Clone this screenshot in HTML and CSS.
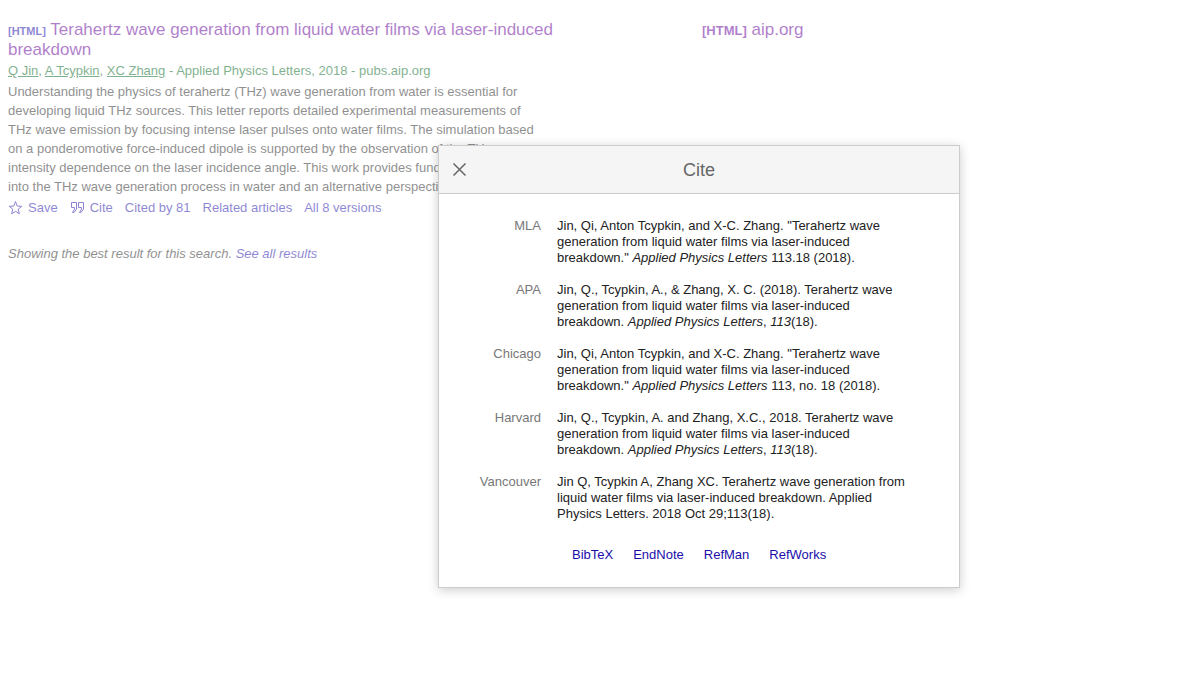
FILE: index.html
```html
<!DOCTYPE html>
<html lang="en">

<head>
    <meta charset="UTF-8">
    <meta name="viewport" content="width=device-width, initial-scale=1.0">
    <title>Search Results</title>
    <link rel="stylesheet" href="styles.css">
</head>

<body>

    <main class="page">
        <div class="result">
            <div class="result-main">
                <h3 class="title"><span class="tag">[HTML]</span> <a href="#">Terahertz wave generation from liquid water films via laser-induced breakdown</a></h3>
                <div class="authors"><a href="#">Q Jin</a>, <a href="#">A Tcypkin</a>, <a href="#">XC Zhang</a> - Applied Physics Letters, 2018 - pubs.aip.org</div>
                <p class="abstract">Understanding the physics of terahertz (THz) wave generation from water is essential for developing liquid THz sources. This letter reports detailed experimental measurements of THz wave emission by focusing intense laser pulses onto water films. The simulation based on a ponderomotive force-induced dipole is supported by the observation of the THz intensity dependence on the laser incidence angle. This work provides fundamental insights into the THz wave generation process in water and an alternative perspective</p>
                <div class="actions">
                    <a href="#" class="with-icon">
                        <svg width="15" height="16" viewBox="0 0 15 16" fill="none" stroke="currentColor"><path d="M7.5 1.5 L9.2 6 L13.8 6.3 L10.2 9.2 L11.4 13.8 L7.5 11.3 L3.6 13.8 L4.8 9.2 L1.2 6.3 L5.8 6 Z"/></svg>
                        Save</a>
                    <a href="#" class="with-icon">
                        <svg width="15" height="16" viewBox="0 0 15 16" fill="none" stroke="currentColor"><path d="M6.5 2.5 H1.5 V7.5 H4.5 V9 L2.5 12.5 H4 L6.5 9 Z M13.5 2.5 H8.5 V7.5 H11.5 V9 L9.5 12.5 H11 L13.5 9 Z"/></svg>
                        Cite</a>
                    <a href="#">Cited by 81</a>
                    <a href="#">Related articles</a>
                    <a href="#">All 8 versions</a>
                </div>
            </div>
            <div class="result-side"><a href="#"><span class="tag">[HTML]</span> aip.org</a></div>
        </div>
        <p class="best">Showing the best result for this search. <a href="#">See all results</a></p>
    </main>

    <div class="dialog" role="dialog" aria-labelledby="cite-title">
        <div class="dialog-header">
            <button class="close" type="button" aria-label="Close">
                <svg width="15" height="15" viewBox="0 0 15 15" fill="none" stroke="currentColor" stroke-width="1.5"><path d="M1.5 1.5 L13.5 13.5 M13.5 1.5 L1.5 13.5"/></svg>
            </button>
            <h2 id="cite-title">Cite</h2>
        </div>
        <div class="dialog-body">
            <table class="citations">
                <tr>
                    <th scope="row">MLA</th>
                    <td>Jin, Qi, Anton Tcypkin, and X-C. Zhang. "Terahertz wave generation from liquid water films via laser-induced breakdown." <i>Applied Physics Letters</i> 113.18 (2018).</td>
                </tr>
                <tr>
                    <th scope="row">APA</th>
                    <td>Jin, Q., Tcypkin, A., &amp; Zhang, X. C. (2018). Terahertz wave generation from liquid water films via laser-induced breakdown. <i>Applied Physics Letters</i>, <i>113</i>(18).</td>
                </tr>
                <tr>
                    <th scope="row">Chicago</th>
                    <td>Jin, Qi, Anton Tcypkin, and X-C. Zhang. "Terahertz wave generation from liquid water films via laser-induced breakdown." <i>Applied Physics Letters</i> 113, no. 18 (2018).</td>
                </tr>
                <tr>
                    <th scope="row">Harvard</th>
                    <td>Jin, Q., Tcypkin, A. and Zhang, X.C., 2018. Terahertz wave generation from liquid water films via laser-induced breakdown. <i>Applied Physics Letters</i>, <i>113</i>(18).</td>
                </tr>
                <tr>
                    <th scope="row">Vancouver</th>
                    <td>Jin Q, Tcypkin A, Zhang XC. Terahertz wave generation from liquid water films via laser-induced breakdown. Applied Physics Letters. 2018 Oct 29;113(18).</td>
                </tr>
            </table>
            <div class="exports">
                <a href="#">BibTeX</a>
                <a href="#">EndNote</a>
                <a href="#">RefMan</a>
                <a href="#">RefWorks</a>
            </div>
        </div>
    </div>

</body>

</html>
```
FILE: styles.css
```css
body {
    margin: 0;
    background-color: #fff;
    color: #222;
    font-family: "Liberation Sans", Arial, sans-serif;
    font-size: 13px;
    line-height: 16px;
}

a {
    color: #1a0dab;
    text-decoration: none;
}

a:hover {
    text-decoration: underline;
}

/* search result, faded while the dialog is open */
.page {
    padding: 20px 8px;
    opacity: 0.5;
}

.result {
    display: flex;
    gap: 144px;
}

.result-main {
    flex: 0 1 550px;
}

.title {
    margin: 0;
    font-size: 17px;
    font-weight: normal;
    line-height: 20px;
}

.title a,
.result-side a {
    color: #660099;
}

.tag {
    font-size: 13px;
    font-weight: bold;
    line-height: 1;
}

.title .tag {
    color: #1a0dab;
    font-size: 11px;
}

.result-side {
    font-size: 17px;
    line-height: 20px;
}

.authors {
    color: #006621;
    line-height: 22px;
}

.authors a {
    color: #006621;
    text-decoration: underline;
}

.abstract {
    max-width: 530px;
    margin: 0;
    line-height: 19px;
}

.actions {
    display: flex;
    gap: 12px;
    line-height: 24px;
}

.with-icon {
    display: flex;
    align-items: center;
    gap: 5px;
}

.best {
    margin: 24px 0 0;
    line-height: 20px;
    font-style: italic;
}

/* cite dialog */
.dialog {
    position: absolute;
    top: 145px;
    left: 438px;
    width: 520px;
    background-color: #fff;
    border: 1px solid #ccc;
    box-shadow: 0 2px 10px rgba(0, 0, 0, 0.2);
}

.dialog-header {
    display: grid;
    grid-template-columns: 41px 1fr 41px;
    align-items: center;
    height: 47px;
    background-color: #f5f5f5;
    border-bottom: 1px solid #ccc;
    color: #666;
}

.dialog-header h2 {
    margin: 0;
    font-size: 18px;
    font-weight: normal;
    line-height: 22px;
    text-align: center;
}

.close {
    display: flex;
    align-items: center;
    justify-content: center;
    height: 41px;
    padding: 0;
    background: none;
    border: none;
    color: #666;
    cursor: pointer;
}

.dialog-body {
    padding: 16px 40px 24px;
}

.citations {
    border-collapse: collapse;
}

.citations th,
.citations td {
    padding: 8px 0;
    vertical-align: top;
}

.citations th {
    width: 62px;
    padding-right: 16px;
    color: #777;
    font-weight: normal;
    text-align: right;
}

.citations td {
    width: 352px;
}

.exports {
    display: flex;
    gap: 20px;
    padding: 17px 0 0 93px;
}
```
